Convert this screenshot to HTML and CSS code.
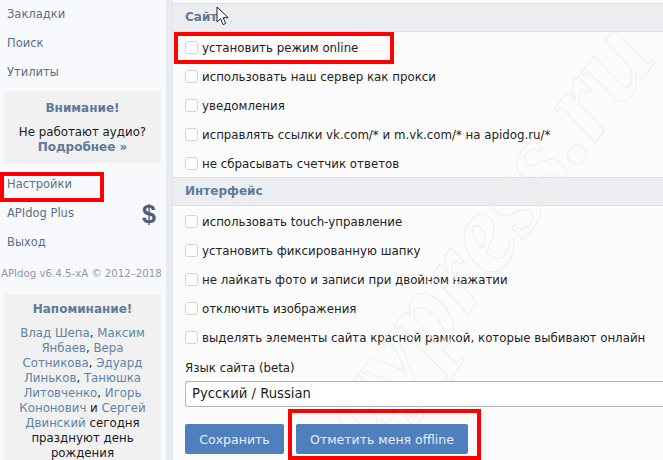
FILE: index.html
```html
<!DOCTYPE html>
<html lang="ru">
<head>
<meta charset="utf-8">
<title>APIdog — настройки</title>
<link rel="stylesheet" href="styles.css">
</head>
<body>
<div class="app">
  <aside class="sidebar">
    <a class="nav-item">Закладки</a>
    <a class="nav-item">Поиск</a>
    <a class="nav-item">Утилиты</a>
    <div class="notice notice-audio">
      <h4 class="notice-title">Внимание!</h4>
      <p class="notice-text">Не работают аудио?<br><a class="strong-link">Подробнее »</a></p>
    </div>
    <a class="nav-item">Настройки</a>
    <a class="nav-item nav-plus">APIdog Plus<span class="dollar">$</span></a>
    <a class="nav-item">Выход</a>
    <div class="copyright">APIdog v6.4.5-xA © 2012–2018</div>
    <div class="notice notice-birthday">
      <h4 class="notice-title">Напоминание!</h4>
      <p class="notice-text"><a>Влад Шепа</a>, <a>Максим Янбаев</a>, <a>Вера Сотникова</a>, <a>Эдуард Линьков</a>, <a>Танюшка Литовченко</a>, <a>Игорь Кононович</a> и <a>Сергей Двинский</a> сегодня празднуют день рождения</p>
    </div>
  </aside>
  <main class="content">
    <h3 class="section-head">Сайт</h3>
    <div class="rows">
      <label class="row"><span class="check"></span>установить режим online</label>
      <label class="row"><span class="check"></span>использовать наш сервер как прокси</label>
      <label class="row"><span class="check"></span>уведомления</label>
      <label class="row"><span class="check"></span>исправлять ссылки vk.com/* и m.vk.com/* на apidog.ru/*</label>
      <label class="row"><span class="check"></span>не сбрасывать счетчик ответов</label>
    </div>
    <h3 class="section-head">Интерфейс</h3>
    <div class="rows">
      <label class="row"><span class="check"></span>использовать touch-управление</label>
      <label class="row"><span class="check"></span>установить фиксированную шапку</label>
      <label class="row"><span class="check"></span>не лайкать фото и записи при двойном нажатии</label>
      <label class="row"><span class="check"></span>отключить изображения</label>
      <label class="row"><span class="check"></span>выделять элементы сайта красной рамкой, которые выбивают онлайн</label>
    </div>
    <div class="lang">
      <div class="lang-label">Язык сайта (beta)</div>
      <div class="select">Русский / Russian</div>
    </div>
    <div class="actions">
      <button class="btn btn-save">Сохранить</button>
      <button class="btn btn-offline">Отметить меня offline</button>
    </div>
  </main>
  <svg class="watermark" width="663" height="460" viewBox="0 0 663 460" aria-hidden="true">
    <text class="watermark-text" transform="translate(368 450) rotate(-53.5)">aypress.ru</text>
  </svg>
  <div class="mark mark-online"></div>
  <div class="mark mark-settings"></div>
  <div class="mark mark-offline"></div>
  <svg class="cursor" width="14" height="20" viewBox="0 0 14 20" aria-hidden="true">
    <path d="M1 1v15l3.6-3.4 2.5 6 2.6-1.1-2.5-5.8h5z" fill="#fff" stroke="#222" stroke-width="1"/>
  </svg>
</div>
</body>
</html>
```
FILE: styles.css
```css
* { box-sizing: border-box; }
html, body { margin: 0; padding: 0; }
body {
  width: 663px;
  height: 460px;
  overflow: hidden;
  font-family: "DejaVu Sans", Verdana, sans-serif;
  font-size: 11.8px;
  color: #1c1c1c;
}
.app {
  position: relative;
  display: flex;
  width: 663px;
  height: 460px;
  overflow: hidden;
  background: #e8ebef;
}
.sidebar {
  flex: 0 0 166px;
  height: 460px;
  background: #f8f9fc;
  padding: 0 5px 0 4px;
  overflow: hidden;
}
.nav-item {
  position: relative;
  display: block;
  height: 29px;
  line-height: 28px;
  padding-left: 3px;
  font-size: 11.5px;
  color: #5b6f86;
}
.dollar {
  position: absolute;
  right: 5px;
  top: 1px;
  font-family: "Liberation Sans", Arial, sans-serif;
  font-size: 25px;
  line-height: 28px;
  font-weight: 700;
  color: #4a6077;
}
.notice {
  background: #f1f1f2;
  text-align: center;
  line-height: 15px;
}
.notice-audio { height: 72px; margin: 4px 0 7px; padding: 10px 6px; }
.notice-title {
  margin: 0 0 9px;
  font-size: 12px;
  line-height: 15px;
  font-weight: 700;
  color: #5f7a96;
}
.notice-text { margin: 0; color: #1a1a1a; }
.notice-text a { color: #5f84a5; }
.notice-text .strong-link { font-size: 12px; font-weight: 700; color: #5f7a96; }
.copyright {
  margin: 9px -4px 0;
  padding-left: 1px;
  white-space: nowrap;
  font-size: 10.2px;
  line-height: 15px;
  color: #8d9aa8;
}
.notice-birthday { margin-top: 13px; height: 170px; padding: 8px 4px; }
.content {
  flex: 1 1 auto;
  margin-left: 6px;
  padding-top: 3px;
  border-left: 1px solid #e1e3e7;
  background: #fbfbfc;
  height: 460px;
}
.section-head {
  margin: 0;
  height: 29px;
  line-height: 27px;
  padding-left: 12px;
  font-size: 12px;
  font-weight: 700;
  color: #5f7a96;
  background: #ebedf1;
  border-top: 1px solid #dcdee2;
  border-bottom: 1px solid #dfe1e5;
}
.rows { height: 145px; padding-top: 1px; }
.row {
  display: flex;
  align-items: center;
  height: 29px;
  padding-left: 12px;
  white-space: nowrap;
  color: #222;
}
.check {
  flex: 0 0 13px;
  width: 13px;
  height: 13px;
  margin-right: 4px;
  background: #fff;
  border: 1px solid #d3d4d8;
  border-radius: 3px;
}
.lang { padding: 7px 0 0 12px; }
.lang-label { height: 23px; line-height: 20px; color: #222; }
.select {
  position: relative;
  z-index: 1;
  height: 26px;
  line-height: 24px;
  padding-left: 6px;
  font-size: 13.2px;
  background: #fff;
  border: 1px solid #b4b4b4;
  border-right: 0;
  border-radius: 3px 0 0 3px;
}
.actions { display: flex; gap: 12px; padding: 17px 0 0 12px; }
.btn {
  position: relative;
  z-index: 1;
  height: 30px;
  border: 0;
  border-radius: 2px;
  background: #4f7fbd;
  color: #e8eef6;
  font-family: inherit;
  font-size: 12.5px;
  padding: 0;
}
.btn-save { width: 99px; }
.btn-offline { width: 172px; }
.watermark { position: absolute; left: 0; top: 0; pointer-events: none; }
.watermark-text {
  font-family: "Liberation Serif", serif;
  font-size: 115px;
  font-weight: 700;
  font-style: italic;
  fill: none;
  stroke: #eeeeee;
  stroke-width: 1;
}
.mark { position: absolute; z-index: 2; border: 4px solid #f00; }
.mark-online { left: 174px; top: 32px; width: 220px; height: 32px; }
.mark-settings { left: 0; top: 172px; width: 104px; height: 30px; }
.mark-offline { left: 288px; top: 409px; width: 193px; height: 51px; }
.cursor { position: absolute; z-index: 2; left: 216px; top: 6px; }
```
